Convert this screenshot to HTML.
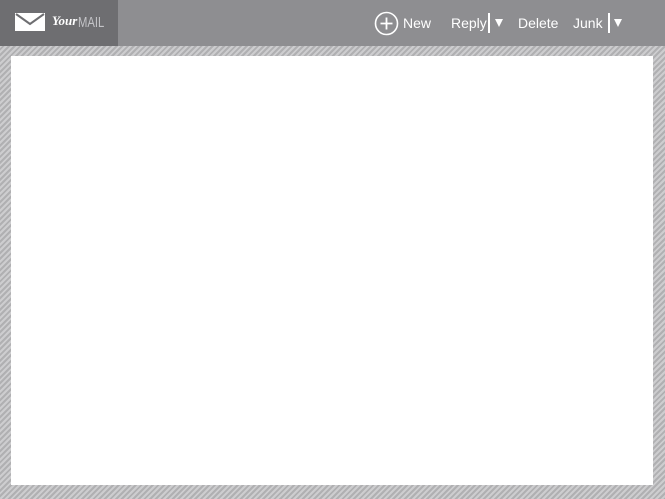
<!DOCTYPE html><html><head><style>
body{margin:0;width:665px;height:499px;overflow:hidden;font-family:"Liberation Sans",sans-serif;
background:repeating-linear-gradient(135deg,#cdcdcf 0 2px,#b0b0b2 2px 4px);position:relative}
.h{position:absolute;left:0;top:0;width:665px;height:46px;background:#8e8e91}
.logo{position:absolute;left:0;top:0;width:118px;height:46px;background:#6e6e71}
.p{position:absolute;left:11px;top:56px;width:642px;height:429px;background:#fff}
.t{position:absolute;top:15px;color:#fff;font-size:14px}
.a{position:absolute;top:19px;width:0;height:0;border-left:4px solid transparent;border-right:4px solid transparent;border-top:8px solid #fff}
</style></head><body>
<div class="h"></div>
<div class="logo">
<svg style="position:absolute;left:15px;top:13px" width="30" height="18"><rect x="0" y="0" width="30" height="18" fill="#fff"/><path d="M1 1 L15 11 L29 1" stroke="#6e6e71" stroke-width="2" fill="none"/></svg>
<span style="position:absolute;left:52px;top:13px;color:#fff;font:italic bold 13px 'Liberation Serif',serif">Your</span>
<span style="position:absolute;left:78px;top:14px;color:#c4c4c8;font-size:15px;transform:scaleX(.75);transform-origin:left">MAIL</span>
</div>
<svg style="position:absolute;left:374px;top:11px" width="25" height="25"><circle cx="12.5" cy="12.5" r="11" stroke="#fff" stroke-width="1.6" fill="none"/><path d="M12.5 6.5v12M6.5 12.5h12" stroke="#fff" stroke-width="1.8"/></svg>
<span class="t" style="left:403px">New</span>
<span class="t" style="left:451px">Reply</span>
<div style="position:absolute;left:488px;top:13px;width:2px;height:20px;background:#fff"></div>
<div class="a" style="left:495px"></div>
<span class="t" style="left:518px">Delete</span>
<span class="t" style="left:573px">Junk</span>
<div style="position:absolute;left:608px;top:13px;width:2px;height:20px;background:#fff"></div>
<div class="a" style="left:614px"></div>
<div class="p"></div>
</body></html>
